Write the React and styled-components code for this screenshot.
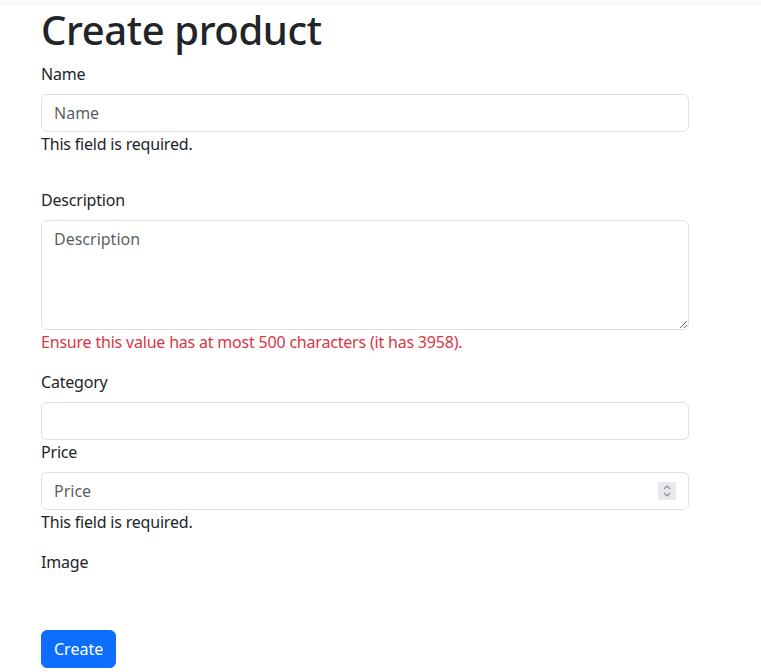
import React from "react";
import styled, {createGlobalStyle} from "styled-components";

const GlobalStyle = createGlobalStyle`
  * { box-sizing: border-box; }
  body {
    margin: 0;
    background: #fff;
    color: #212529;
    font-family: "Noto Sans", "Open Sans", sans-serif;
    font-size: 16px;
    line-height: 1.5;
    letter-spacing: -0.2px;
  }
`;

const TopBar = styled.div`
  height: 6px;
  background-color: #f8f9fa;
`;

const Page = styled.main`
  width: 648px;
  margin-left: 41px;
`;

const Title = styled.h1`
  margin: 0 0 8px;
  font-size: 40px;
  font-weight: 500;
  line-height: 1.2;
  letter-spacing: -0.4px;
`;

const Field = styled.div`
  margin-bottom: ${(p) => p.$gap || 0}px;
`;

const Label = styled.label`
  display: block;
  margin-bottom: 8px;
`;

const inputCss = `
  display: block;
  width: 100%;
  padding: 6px 12px;
  font: inherit;
  color: #212529;
  background: #fff;
  border: 1px solid #dee2e6;
  border-radius: 6px;
  outline: none;
  &::placeholder { color: rgba(33, 37, 41, 0.75); }
`;

const Input = styled.input`
  ${inputCss}
  height: 38px;
  &::-webkit-inner-spin-button,
  &::-webkit-outer-spin-button {
    -webkit-appearance: none;
    margin: 0;
  }
`;

const TextArea = styled.textarea`
  ${inputCss}
  height: 110px;
  resize: vertical;
`;

const NumberWrap = styled.div`
  position: relative;
`;

const Spinner = styled.span`
  position: absolute;
  right: 13px;
  top: 10px;
  width: 18px;
  height: 18px;
  background: #e9e9ed;
  display: flex;
  align-items: center;
  justify-content: center;
  pointer-events: none;
`;

const Feedback = styled.div`
  color: ${(p) => (p.$error ? "#dc3545" : "#212529")};
`;

const Button = styled.button`
  display: inline-block;
  padding: 6px 12px;
  font: inherit;
  line-height: 1.5;
  color: #fff;
  background-color: #0d6efd;
  border: 1px solid #0d6efd;
  border-radius: 6px;
  cursor: pointer;
`;

export default function App() {
  return (
    <>
      <GlobalStyle />
      <TopBar />
      <Page>
        <Title>Create product</Title>
        <Field $gap={32}>
          <Label htmlFor="name">Name</Label>
          <Input id="name" placeholder="Name" />
          <Feedback>This field is required.</Feedback>
        </Field>
        <Field $gap={16}>
          <Label htmlFor="description">Description</Label>
          <TextArea id="description" placeholder="Description" />
          <Feedback $error>
            Ensure this value has at most 500 characters (it has 3958).
          </Feedback>
        </Field>
        <Field>
          <Label htmlFor="category">Category</Label>
          <Input id="category" />
        </Field>
        <Field $gap={16}>
          <Label htmlFor="price">Price</Label>
          <NumberWrap>
            <Input id="price" type="number" placeholder="Price" />
            <Spinner>
              <svg width="10" height="14" viewBox="0 0 10 14" fill="none" stroke="#8a8a93" strokeWidth="1.2">
                <path d="M2 5 L5 2 L8 5" />
                <path d="M2 9 L5 12 L8 9" />
              </svg>
            </Spinner>
          </NumberWrap>
          <Feedback>This field is required.</Feedback>
        </Field>
        <Field $gap={56}>
          <Label>Image</Label>
        </Field>
        <Button type="submit">Create</Button>
      </Page>
    </>
  );
}
